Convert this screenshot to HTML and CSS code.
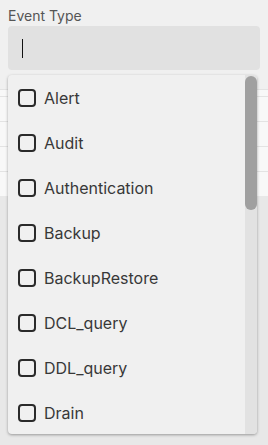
FILE: index.html
```html
<!DOCTYPE html>
<html>
<head>
<meta charset="utf-8"/>
<title>Event Type filter</title>
<link rel="stylesheet" href="styles.css">
</head>
<body>
<div class="field">
  <label class="field-label">Event Type</label>
  <div class="field-input"><span class="caret"></span></div>

  <div class="dropdown">
    <ul class="options">
      <li><span class="box"></span>Alert</li>
      <li><span class="box"></span>Audit</li>
      <li><span class="box"></span>Authentication</li>
      <li><span class="box"></span>Backup</li>
      <li><span class="box"></span>BackupRestore</li>
      <li><span class="box"></span>DCL_query</li>
      <li><span class="box"></span>DDL_query</li>
      <li><span class="box"></span>Drain</li>
    </ul>
    <div class="scroll-track"><div class="scroll-thumb"></div></div>
  </div>
</div>

<table class="rows">
  <tr class="head"><td></td></tr>
  <tr><td></td></tr>
  <tr><td></td></tr>
  <tr><td></td></tr>
  <tr><td></td></tr>
</table>
<div class="lower"></div>
</body>
</html>
```

FILE: styles.css
```css
body {
   margin: 0;
   background-color: #f0f0f0;
   font-family: Inter, "Noto Sans", sans-serif;
   color: #333;
   height: 445px;
   overflow: hidden;
}

.field {
   position: relative;
   padding: 6px 8px 0 8px;
}

.field-label {
   display: block;
   font-size: 14px;
   line-height: 20px;
   color: #555;
}

.field-input {
   height: 44px;
   background-color: #e1e1e1;
   border-radius: 4px;
   display: flex;
   align-items: center;
   padding-left: 14px;
}

.caret {
   width: 1px;
   height: 19px;
   background-color: #111;
}

/* background table peeking out around the dropdown */
.rows {
   width: 100%;
   border-collapse: collapse;
   margin-top: 19px;
   background-color: #f8f8f8;
}

.rows td {
   height: 24px;
   border-top: 1px solid #e3e3e3;
   padding: 0;
}

.rows .head td {
   height: 6px;
}

.lower {
   height: 260px;
   background-color: #e8e8e8;
}

/* dropdown overlay */
.dropdown {
   position: absolute;
   left: 8px;
   right: 11px;
   top: 75px;
   height: 359px;
   background-color: #f0f0f0;
   border-radius: 4px;
   box-shadow: 0 1px 3px rgba(0, 0, 0, 0.35);
   overflow: hidden;
   display: flex;
   z-index: 2;
}

.options {
   list-style: none;
   margin: 0;
   padding: 0;
   flex: 1;
}

.options li {
   height: 45px;
   display: flex;
   align-items: center;
   padding-left: 10px;
   font-size: 16px;
   color: #383838;
}

.box {
   width: 14px;
   height: 14px;
   border: 2px solid #2a2a2a;
   border-radius: 4px;
   margin-right: 8px;
   flex: none;
}

.scroll-track {
   width: 12px;
   background-color: #e2e2e2;
   padding-top: 1px;
}

.scroll-thumb {
   height: 134px;
   background-color: #a0a0a0;
   border-radius: 6px;
}
```
